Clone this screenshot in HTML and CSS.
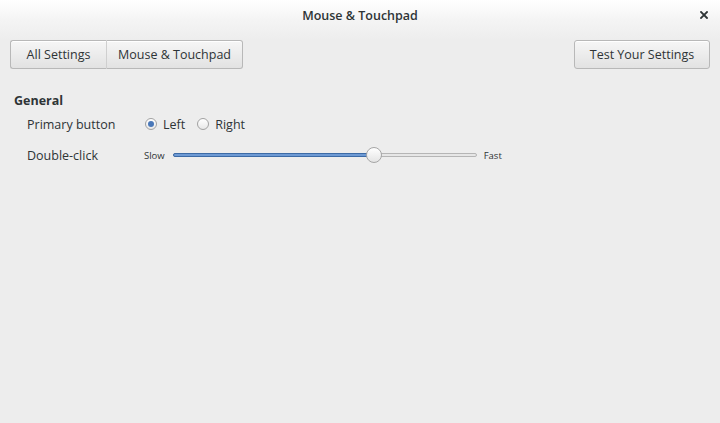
FILE: index.html
```html
<!DOCTYPE html>
<html>
<head>
<meta charset="utf-8">
<link rel="stylesheet" href="styles.css">
</head>
<body>
<div class="window">
  <div class="top">
    <div class="titlebar">
      <span class="title">Mouse &amp; Touchpad</span>
      <span class="close">
        <svg width="8" height="8" viewBox="0 0 8 8"><path d="M1 1L7 7M7 1L1 7" stroke="#2e3436" stroke-width="1.8" stroke-linecap="square"/></svg>
      </span>
    </div>
    <div class="toolbar">
      <div class="linked">
        <button class="btn">All Settings</button>
        <button class="btn">Mouse &amp; Touchpad</button>
      </div>
      <button class="btn single">Test Your Settings</button>
    </div>
  </div>
  <div class="content">
    <div class="heading">General</div>
    <div class="row first">
      <div class="label">Primary button</div>
      <div class="radios">
        <span class="radio checked"></span><span class="rlabel">Left</span>
        <span class="radio"></span><span class="rlabel">Right</span>
      </div>
    </div>
    <div class="row second">
      <div class="label">Double-click</div>
      <div class="slider-wrap">
        <span class="mark">Slow</span>
        <div class="slider">
          <div class="fill" style="width: 66.2%"></div>
          <div class="thumb" style="left: 66.2%"></div>
        </div>
        <span class="mark">Fast</span>
      </div>
    </div>
  </div>
</div>
</body>
</html>
```
FILE: styles.css
```css
html, body {
  margin: 0;
  padding: 0;
}
body {
  width: 720px;
  height: 423px;
  background: #ededed;
  font-family: "Open Sans", "DejaVu Sans", sans-serif;
  font-size: 12.5px;
  color: #2e3436;
  overflow: hidden;
}
.window {
  height: 423px;
  background: #ededed;
}
.top {
  background: linear-gradient(to bottom, #ffffff 0px, #f4f4f4 20px, #ededed 40px);
}
.titlebar {
  position: relative;
  height: 31px;
  display: flex;
  align-items: center;
  justify-content: center;
}
.title {
  font-weight: 600;
  font-size: 12.5px;
  color: #2e3436;
  margin-top: -1px;
}
.close {
  position: absolute;
  right: 12px;
  top: 11px;
  width: 8px;
  height: 8px;
  display: flex;
}
.toolbar {
  display: flex;
  justify-content: space-between;
  align-items: center;
  padding: 9px 10px 0 10px;
}
.linked {
  display: flex;
}
.btn {
  font-family: inherit;
  font-size: 12.5px;
  color: #2e3436;
  height: 29px;
  padding: 0;
  white-space: nowrap;
  border: 1px solid #b8b8b8;
  background: linear-gradient(to bottom, #f6f6f6, #e2e2e2);
  box-shadow: inset 0 1px #ffffff;
  margin: 0;
}
.linked .btn:first-child {
  border-radius: 3px 0 0 3px;
  border-right: 1px solid #cfcfcf;
  width: 97px;
}
.linked .btn:last-child {
  border-radius: 0 3px 3px 0;
  border-left: none;
  width: 136px;
}
.single {
  border-radius: 3px;
  width: 136px;
}
.content {
  padding: 24px 0 0 14px;
}
.heading {
  font-weight: bold;
  height: 16px;
  line-height: 16px;
}
.row {
  display: flex;
  align-items: center;
  padding-left: 13px;
}
.row.first {
  height: 30px;
}
.row.second {
  height: 32px;
}
.label {
  width: 117px;
}
.radios {
  display: flex;
  align-items: center;
}
.radio {
  width: 12px;
  height: 12px;
  box-sizing: border-box;
  border-radius: 50%;
  border: 1px solid #a2a2a2;
  background: linear-gradient(to bottom, #ffffff, #e8e8e8);
  display: inline-flex;
  align-items: center;
  justify-content: center;
  margin-left: 1px;
}
.radio.checked::after {
  content: "";
  width: 6px;
  height: 6px;
  border-radius: 50%;
  background: #4a78b8;
}
.rlabel {
  margin-left: 6px;
  margin-right: 11px;
}
.slider-wrap {
  display: flex;
  align-items: center;
}
.mark {
  font-size: 9.5px;
}
.slider {
  position: relative;
  width: 304px;
  height: 4px;
  margin: 0 7px 0 8px;
  box-sizing: border-box;
  border: 1px solid #b5b5b5;
  border-radius: 3px;
  background: #e6e6e6;
}
.fill {
  position: absolute;
  left: -1px;
  top: -1px;
  height: 4px;
  box-sizing: border-box;
  border: 1px solid #3d6ba6;
  border-radius: 3px 0 0 3px;
  background: #6e9ad4;
}
.thumb {
  position: absolute;
  top: -7px;
  width: 16px;
  height: 16px;
  box-sizing: border-box;
  margin-left: -8px;
  border-radius: 50%;
  border: 1px solid #a6a6a6;
  background: linear-gradient(to bottom, #ffffff, #e4e4e4);
}
```
